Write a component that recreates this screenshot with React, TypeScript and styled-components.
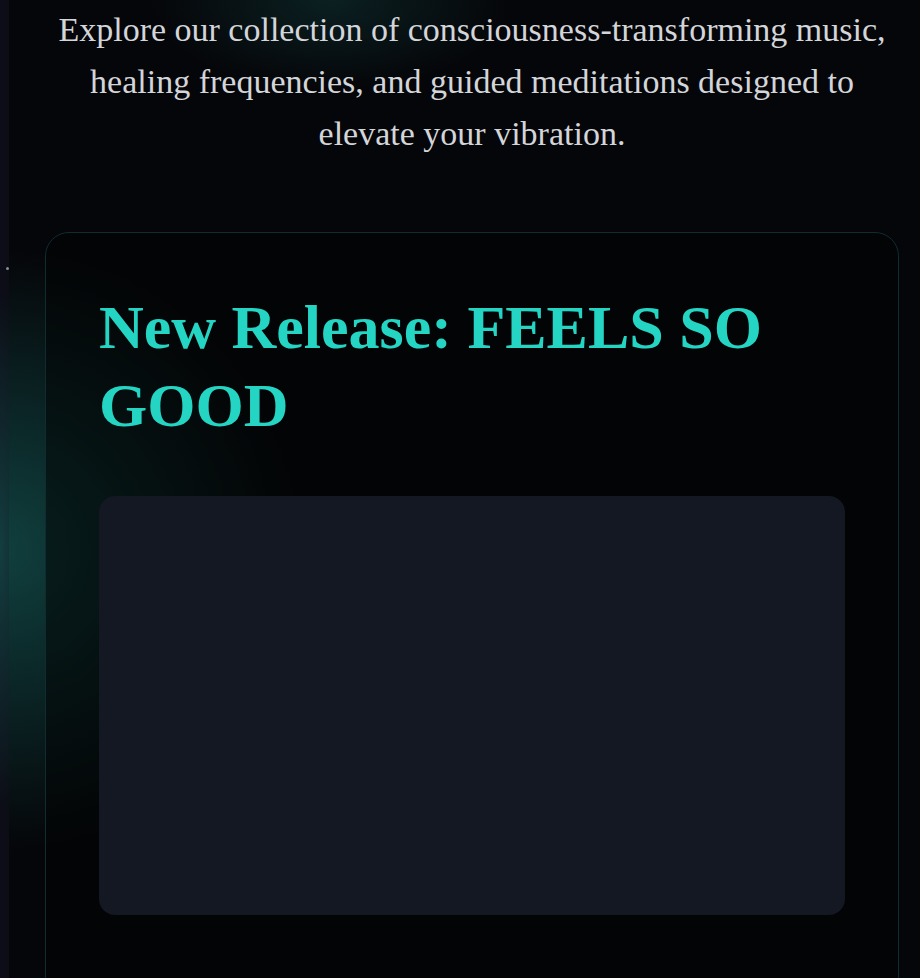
import styled, { createGlobalStyle } from 'styled-components';

const GlobalStyle = createGlobalStyle`
  html, body {
    margin: 0;
    padding: 0;
    background: #050609;
    overflow: hidden;
  }
  * {
    box-sizing: border-box;
  }
`;

function App() {
  return (
    <>
      <GlobalStyle />
      <Page>
        <LeftRail>
          <Spark />
        </LeftRail>
        <Main>
          <Column>
            <Intro>
              Explore our collection of consciousness-transforming music, healing frequencies, and
              guided meditations designed to elevate your vibration.
            </Intro>
            <ReleaseCard>
              <ReleaseTitle>New Release: FEELS SO GOOD</ReleaseTitle>
              <PlayerFrame />
            </ReleaseCard>
          </Column>
        </Main>
      </Page>
    </>
  );
}

const Page = styled.div`
  display: flex;
  width: 920px;
  height: 978px;
  overflow: hidden;
  background:
    radial-gradient(ellipse 300px 300px at 0px 550px, rgba(18, 74, 72, 0.85), rgba(18, 74, 72, 0) 100%),
    radial-gradient(ellipse 180px 90px at 330px 0px, rgba(20, 70, 70, 0.4), rgba(20, 70, 70, 0) 100%),
    #050609;
`;

const LeftRail = styled.div`
  position: relative;
  width: 9px;
  flex-shrink: 0;
  background:
    radial-gradient(ellipse 40px 260px at 0px 550px, rgba(22, 78, 78, 0.75), rgba(22, 78, 78, 0) 100%),
    #0c0d16;
`;

const Spark = styled.span`
  position: absolute;
  left: 6px;
  top: 267px;
  width: 3px;
  height: 3px;
  border-radius: 50%;
  background: #8a8d96;
`;

const Main = styled.main`
  flex: 1;
  padding: 4px 0 0 36px;
`;

const Column = styled.div`
  width: 854px;
  display: flex;
  flex-direction: column;
  align-items: center;
`;

const Intro = styled.p`
  margin: 0;
  max-width: 840px;
  text-align: center;
  font-family: 'Liberation Serif', 'DejaVu Serif', serif;
  font-size: 34px;
  line-height: 52px;
  color: #d3d5d9;
`;

const ReleaseCard = styled.section`
  align-self: stretch;
  margin-top: 72px;
  min-height: 820px;
  padding: 55px 53px 60px;
  border: 1px solid #0f2c31;
  border-radius: 24px;
  background: rgba(2, 3, 4, 0.55);
`;

const ReleaseTitle = styled.h2`
  margin: 0 0 52px;
  font-family: 'Liberation Serif', 'DejaVu Serif', serif;
  font-weight: 700;
  font-size: 62px;
  line-height: 78px;
  color: #25d5c4;
`;

const PlayerFrame = styled.div`
  height: 419px;
  border-radius: 16px;
  background: #141823;
`;

export default App;
